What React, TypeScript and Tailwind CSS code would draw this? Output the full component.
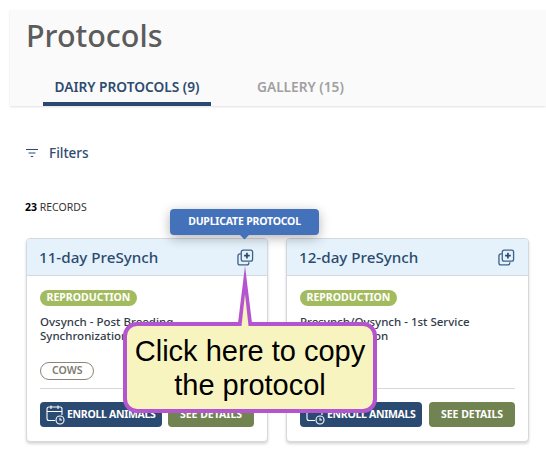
import React from "react";

const font = "font-['Noto_Sans',sans-serif]";

const CopyIcon = () => (
  <svg width="17" height="17" viewBox="0 0 18 18" fill="none" stroke="#3f6288" strokeWidth="1.4">
    <path d="M4 5.2H3a2 2 0 0 0-2 2V14.8a2 2 0 0 0 2 2h7.5a2 2 0 0 0 2-2V14" />
    <rect x="4.5" y="1.2" width="12" height="11.6" rx="2" />
    <path d="M10.5 4v6M7.5 7h6" strokeWidth="1.8" stroke="#2a4a70" />
  </svg>
);

const CalendarIcon = () => (
  <svg width="20" height="20" viewBox="0 0 20 20" fill="none" stroke="#fff" strokeWidth="1.1" className="shrink-0">
    <path d="M9 15.5H3a2 2 0 0 1-2-2V4a2 2 0 0 1 2-2h11a2 2 0 0 1 2 2v6" />
    <path d="M1 6.5h15M5 .5v3.5M12 .5v3.5" />
    <circle cx="14" cy="15" r="4" />
    <path d="M14 12.8V15h2" />
  </svg>
);

interface CardProps {
  title: string;
  line1: string;
  line2: string;
  tag: string;
  width: string;
}

const Card: React.FC<CardProps> = ({ title, line1, line2, tag, width }) => (
  <div className={`${width} h-[204px] shrink-0 rounded border border-[#d5d8dc] bg-white shadow-[0_2px_3px_rgba(0,0,0,0.16)]`}>
    <div className="flex h-[37px] items-center justify-between rounded-t border-b border-[#d5d8dc] bg-[#e5f2fb] pr-[13px] pl-[12px]">
      <span className="text-[15.2px] font-medium text-[#2c4a6e]">{title}</span>
      <CopyIcon />
    </div>
    <div className="px-[13px] pt-[14px]">
      <span className="flex h-4 w-[97px] items-center justify-center rounded-full bg-[#a3bb5f] text-[10.5px] font-bold text-white">
        REPRODUCTION
      </span>
      <p className="mt-[9px] text-[11.5px] leading-[14px] font-medium text-[#333b47]">
        {line1}
        <br />
        {line2}
      </p>
      <div className="mt-[19px] flex">
        <span className="flex h-[18px] items-center rounded-full border border-[#8a8778] px-[11px] text-[10.5px] font-semibold text-[#7d7b70]">
          {tag}
        </span>
      </div>
      <div className="mt-[8px] border-t border-[#d8d8d8] pt-[13px]">
        <div className="flex justify-between">
          <span className="flex h-[25px] w-[122px] items-center gap-[1px] rounded bg-[#2b4a72] pl-[6px] text-[10.5px] font-bold tracking-[-0.3px] whitespace-nowrap text-white">
            <CalendarIcon />
            ENROLL ANIMALS
          </span>
          <span className="flex h-[25px] w-[86px] items-center justify-center rounded bg-[#728352] text-[10.5px] font-bold whitespace-nowrap text-white">
            SEE DETAILS
          </span>
        </div>
      </div>
    </div>
  </div>
);

export default function App() {
  return (
    <div className={`relative h-[464px] w-[546px] overflow-hidden bg-white ${font}`}>
      <div className="pt-[10px] pl-[10px]">
        <header className="h-[96px] bg-[#fafafa] shadow-[0_1px_2px_rgba(0,0,0,0.12)]">
          <h1 className="pt-[3px] pl-4 text-[30.5px] leading-[44px] font-medium text-[#5c5c5c]">Protocols</h1>
          <nav className="mt-[20px] flex pl-[33px]">
            <div className="h-[29px] w-[168px] border-b-[4px] border-[#2b4a72] text-center text-[13.7px] leading-[20px] font-semibold whitespace-nowrap text-[#2e4b70]">
              DAIRY PROTOCOLS (9)
            </div>
            <div className="ml-[46px] text-[13.7px] leading-[20px] font-semibold text-[#a0a0a0]">GALLERY (15)</div>
          </nav>
        </header>
      </div>

      <main className="pr-[16px] pl-[26px]">
        <div className="mt-[37px] flex items-center gap-[11px] text-[#2e4b70]">
          <svg width="12" height="10" viewBox="0 0 12 10" fill="none" stroke="#2e4b70" strokeWidth="1.2">
            <path d="M0 1.5h12M2.5 5h7M4.8 8.5h2.4" />
          </svg>
          <span className="text-[13.5px] leading-5 font-medium">Filters</span>
        </div>
        <div className="mt-[36px] -ml-px text-[10.5px] leading-4 text-[#333]">
          <b className="font-bold text-black">23</b> RECORDS
        </div>
        <div className="mt-[23px] flex gap-[18px]">
          <Card width="w-[242px]" title="11-day PreSynch" line1="Ovsynch - Post Breeding" line2="Synchronization" tag="COWS" />
          <Card
            width="w-[243px]"
            title="12-day PreSynch"
            line1="Presynch/Ovsynch - 1st Service"
            line2="Synchronization"
            tag="HEIFERS"
          />
        </div>
      </main>

      {/* tooltip over the copy icon */}
      <div className="absolute top-[209px] left-[170px] flex h-[26px] w-[149px] items-center justify-center rounded-sm bg-[#4472ba] text-[10.5px] font-bold tracking-[-0.2px] text-white shadow-[0_3px_12px_rgba(0,0,0,0.3)]">
        DUPLICATE PROTOCOL
        <span className="absolute top-[22px] left-[71px] h-[7px] w-[7px] rotate-45 bg-[#4472ba]" />
      </div>

      {/* callout */}
      <div className="absolute top-[322px] left-[123px] flex h-[91px] w-[254px] items-center justify-center rounded-[14px] border-[4px] border-[#b455cf] bg-[#f7f4c0] text-center font-['Liberation_Sans',sans-serif] text-[29px] leading-[34px] text-black">
        <span>
          Click here to copy
          <br />
          the protocol
        </span>
      </div>
      <svg className="absolute top-[266px] left-[233px]" width="24" height="62" viewBox="0 0 24 62">
        <path d="M12 0 L5 57 H19 Z" fill="#b455cf" />
        <path d="M12 28 L8.5 60 H15.5 Z" fill="#f7f4c0" />
      </svg>
    </div>
  );
}
